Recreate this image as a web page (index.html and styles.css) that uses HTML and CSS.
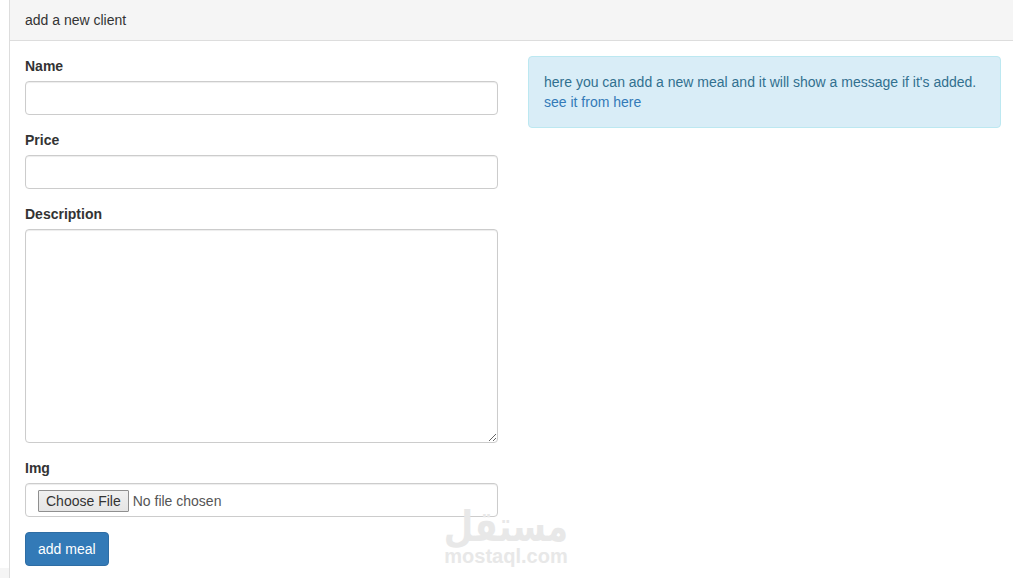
FILE: index.html
```html
<!DOCTYPE html>
<html lang="en">
<head>
<meta charset="utf-8">
<title>add a new client</title>
<link rel="stylesheet" href="styles.css">
</head>
<body>
<div class="panel">
  <div class="panel-heading">add a new client</div>
  <div class="panel-body">
    <form class="col">
      <div class="form-group">
        <label class="label">Name</label>
        <input class="control" type="text">
      </div>
      <div class="form-group">
        <label class="label">Price</label>
        <input class="control" type="text">
      </div>
      <div class="form-group">
        <label class="label">Description</label>
        <textarea class="control textarea"></textarea>
      </div>
      <div class="form-group">
        <label class="label">Img</label>
        <input class="control file" type="file">
      </div>
      <button class="btn" type="button">add meal</button>
    </form>
    <div class="col">
      <div class="alert">here you can add a new meal and it will show a message if it's added. <a class="alert-link" href="#">see it from here</a></div>
    </div>
  </div>
</div>
<div class="corner"></div>
<div class="watermark">
  <div class="wm-ar" dir="rtl" lang="ar">مستقل</div>
  <div class="wm-en">mostaql.com</div>
</div>
</body>
</html>
```
FILE: styles.css
```css
* { box-sizing: border-box; }
html, body { height: 100%; overflow: hidden; }
body {
  margin: 0;
  padding-left: 9px;
  background: #fff;
  color: #333;
  font-family: "Liberation Sans", Arial, sans-serif;
  font-size: 14px;
  line-height: 20px;
}
.panel {
  width: 1008px;
  border-left: 1px solid #ddd;
  background: #fff;
}
.panel-heading {
  height: 41px;
  padding: 10px 15px;
  background: #f5f5f5;
  border-bottom: 1px solid #ddd;
}
.panel-body {
  display: grid;
  grid-template-columns: 473px 473px;
  column-gap: 30px;
  padding: 15px;
}
.form-group { margin-bottom: 15px; }
.label {
  display: block;
  margin-bottom: 5px;
  font-weight: 700;
}
.control {
  display: block;
  width: 100%;
  height: 34px;
  padding: 6px 12px;
  background: #fff;
  border: 1px solid #ccc;
  border-radius: 4px;
  box-shadow: inset 0 1px 1px rgba(0,0,0,.075);
  color: #555;
  font-family: inherit;
  font-size: 14px;
  line-height: 20px;
}
.textarea { height: 214px; resize: vertical; }
.file::file-selector-button {
  padding: 2px 7px;
  background: linear-gradient(#f0f0f0, #e5e5e5);
  border: 1px solid #8f8f8f;
  border-radius: 1px;
  color: #333;
  font-family: inherit;
  font-size: 14px;
}
.btn {
  display: block;
  height: 34px;
  padding: 6px 12px;
  background: #337ab7;
  border: 1px solid #2e6da4;
  border-radius: 4px;
  color: #fff;
  font-family: inherit;
  font-size: 14px;
  line-height: 20px;
}
.alert {
  padding: 15px;
  background: #d9edf7;
  border: 1px solid #bce8f1;
  border-radius: 4px;
  color: #31708f;
}
.alert-link { color: #337ab7; text-decoration: none; }
.corner {
  position: absolute;
  left: 0;
  top: 568px;
  width: 9px;
  height: 10px;
  background: #f5f5f5;
}
.watermark {
  position: absolute;
  left: 428px;
  top: 504px;
  width: 156px;
  text-align: center;
  color: #e8e8e8;
  font-weight: 700;
}
.wm-ar {
  font-family: "Noto Sans", "DejaVu Sans", sans-serif;
  font-size: 34px;
  line-height: 42px;
  transform: scaleY(1.25);
}
.wm-en {
  font-family: "Liberation Sans", Arial, sans-serif;
  font-size: 20px;
  line-height: 20px;
}
```
